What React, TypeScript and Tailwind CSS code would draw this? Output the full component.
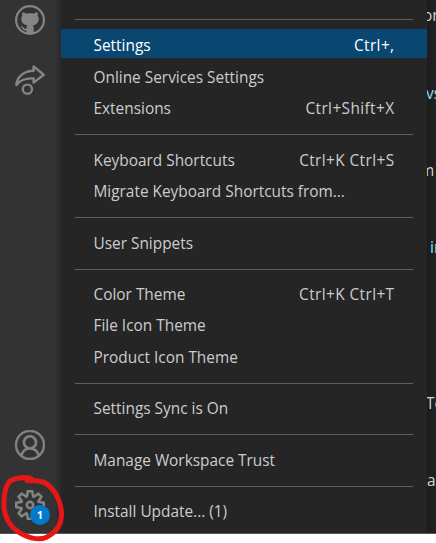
import { VscAccount } from 'react-icons/vsc';

type Item = { label: string; keys?: string; active?: boolean };

const groups: Item[][] = [
  [
    { label: 'Settings', keys: 'Ctrl+,', active: true },
    { label: 'Online Services Settings' },
    { label: 'Extensions', keys: 'Ctrl+Shift+X' },
  ],
  [
    { label: 'Keyboard Shortcuts', keys: 'Ctrl+K Ctrl+S' },
    { label: 'Migrate Keyboard Shortcuts from...' },
  ],
  [{ label: 'User Snippets' }],
  [
    { label: 'Color Theme', keys: 'Ctrl+K Ctrl+T' },
    { label: 'File Icon Theme' },
    { label: 'Product Icon Theme' },
  ],
  [{ label: 'Settings Sync is On' }],
  [{ label: 'Manage Workspace Trust' }],
  [{ label: 'Install Update... (1)' }],
];

function GithubIcon() {
  return (
    <svg width="30" height="30" viewBox="0 0 30 30" fill="none">
      <circle cx="15" cy="15" r="13.9" stroke="currentColor" strokeWidth="2.2" />
      <path
        fill="currentColor"
        d="M7.6 7.2C9 7.1 10.4 8 11.6 8.7C13.8 8.2 16.2 8.2 18.4 8.7C19.6 8 21 7.1 22.4 7.2C22.9 8.5 22.9 9.7 22.7 10.7C23.7 12 23.9 13.6 23.6 15.3C23.1 18.4 21 19.8 17.9 20.3C18.5 21 18.7 21.8 18.7 22.8V29H11.4V25.4C8.6 25.9 7.9 24.5 7.2 23.2C6.8 22.4 6.2 22 5.5 21.5C6.9 21 8 21.9 8.7 22.8C9.5 23.9 10.4 24 11.5 23.5C11.5 22.1 11.7 21.1 12.3 20.3C9 19.8 6.9 18.3 6.4 15.3C6.1 13.6 6.3 12 7.3 10.7C7.1 9.7 7.1 8.5 7.6 7.2Z"
      />
    </svg>
  );
}

function ShareIcon() {
  return (
    <svg width="30" height="30" viewBox="0 0 30 30" fill="none" stroke="currentColor" strokeWidth="2.4" strokeLinejoin="round">
      <path d="M1.3 20C1.8 12.2 8.5 6.1 18.6 5.8V1.4L28.7 9.7L18.6 17.6V13.4C10.5 13 5 15 1.3 20Z" />
      <circle cx="12.4" cy="24.2" r="4.6" />
    </svg>
  );
}

function GearIcon() {
  return (
    <svg
      width="30"
      height="30"
      viewBox="0 0 24 24"
      fill="currentColor"
      fillRule="evenodd"
      stroke="currentColor"
      strokeWidth="0.35"
    >
      <path d="M19.85 8.75l4.15.83v4.84l-4.15.83 2.35 3.52-3.43 3.43-3.52-2.35-.83 4.15H9.58l-.83-4.15-3.52 2.35-3.43-3.43 2.35-3.52L0 14.42V9.58l4.15-.83L1.8 5.23 5.23 1.8l3.52 2.35L9.58 0h4.84l.83 4.15 3.52-2.35 3.43 3.43-2.35 3.52zm-1.57 5.07l4-.81v-2l-4-.81-.54-1.3 2.29-3.43-1.43-1.43-3.43 2.29-1.3-.54-.81-4h-2l-.81 4-1.3.54-3.43-2.29-1.43 1.43L6.38 8.9l-.54 1.3-4 .81v2l4 .81.54 1.3-2.29 3.43 1.43 1.43 3.43-2.29 1.3.54.81 4h2l.81-4 1.3-.54 3.43 2.29 1.43-1.43-2.29-3.43.54-1.3zm-8.186-4.672A3.43 3.43 0 0 1 12 8.57 3.44 3.44 0 0 1 15.43 12a3.43 3.43 0 1 1-5.336-2.852zm.956 4.274c.281.188.612.288.95.288A1.7 1.7 0 0 0 13.71 12a1.71 1.71 0 1 0-2.66 1.422z" />
    </svg>
  );
}

function MenuRow({ label, keys, active }: Item) {
  return (
    <div className="flex h-[31.5px] items-center">
      <div
        className={`flex h-[29px] w-full items-center justify-between pl-[32.5px] pr-[32.5px] pt-[5.2px] ${
          active ? 'bg-[#094771] text-white' : 'text-[#cccccc]'
        }`}
      >
        <span>{label}</span>
        <span className="tracking-[0.4px]">{keys}</span>
      </div>
    </div>
  );
}

export default function App() {
  return (
    <div className="relative h-[543px] w-[436px] overflow-hidden bg-white font-['Open_Sans','Noto_Sans',sans-serif] text-[15.4px] leading-[20px]">
      <div className="flex h-[534px] border-b border-[#555555] bg-[#1e1e1e]">
        <aside className="flex w-[61px] shrink-0 flex-col items-center justify-between bg-linear-to-r from-[#333333] from-90% to-[#282828] pb-[13px] pr-[1px] pt-[5px] text-[#858585]">
          <div className="flex flex-col gap-[30px]">
            <GithubIcon />
            <ShareIcon />
          </div>
          <div className="flex flex-col gap-[30px]">
            <VscAccount size={30} strokeWidth={0.3} />
            <div className="relative">
              <GearIcon />
              <span className="absolute left-[15px] top-[15px] flex size-5 items-center justify-center rounded-full bg-[#007acc] text-[11px] font-bold text-white">
                1
              </span>
            </div>
          </div>
        </aside>
        <nav className="w-[366px] shrink-0 bg-[#252526] pt-[19px]">
          <div className="mx-[14px] h-px bg-[#606060]" />
          <div className="pt-[7.9px]">
            {groups.map((group, i) => (
              <div key={group[0].label}>
                {i > 0 && <div className="mx-[14px] mb-[6.9px] mt-[12px] h-px bg-[#606060]" />}
                {group.map((item) => (
                  <MenuRow key={item.label} {...item} />
                ))}
              </div>
            ))}
          </div>
        </nav>
        <div className="relative flex-1 overflow-hidden bg-linear-to-r from-[#1c1c1c] to-[#222222] text-[#d4d4d4]">
          <span className="absolute -left-[4px] top-[6px]">on</span>
          <span className="absolute -left-px top-[84px] text-[#9cdcfe]">vs</span>
          <span className="absolute -left-[7px] top-[161px]">m</span>
          <span className="absolute left-[3px] top-[238px] text-[#9cdcfe]">in</span>
          <span className="absolute -left-px top-[394px]">Te</span>
          <span className="absolute left-0 top-[471px]">a</span>
        </div>
      </div>
      <svg className="absolute left-0 top-[472px]" width="68" height="71" viewBox="0 0 68 71" fill="none">
        <path
          d="M31 6.5C27 4.5 16 5.5 10 9C5 14 3.8 25 4 34C4.5 45 9 53 17 59C25 65 38 69 46 65.500C55 61 61.500 53 61.500 42C61.500 31 56 19 47 12C42 8.500 37 8.500 27 8.500"
          stroke="#e81717"
          strokeWidth="5"
          strokeLinecap="round"
          strokeLinejoin="round"
        />
      </svg>
    </div>
  );
}
